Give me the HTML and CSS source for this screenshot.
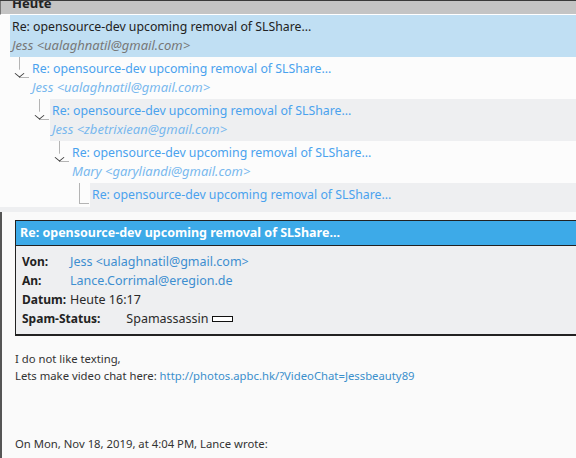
FILE: index.html
```html
<!DOCTYPE html>
<html lang="de">
<head>
  <meta charset="UTF-8">
  <meta name="viewport" content="width=device-width, initial-scale=1.0">
  <title>Posteingang</title>
  <link rel="stylesheet" href="styles.css">
</head>
<body>

  <div class="mail-window">
    <!-- Thread list -->
    <div class="thread-list">
      <div class="group-header"><span>Heute</span></div>

      <div class="thread-row selected">
        <div class="gutter level-0"></div>
        <div class="msg">
          <div class="subject">Re: opensource-dev upcoming removal of SLShare...</div>
          <div class="sender">Jess &lt;ualaghnatil@gmail.com&gt;</div>
        </div>
      </div>

      <div class="thread-row">
        <div class="gutter branch open" style="width:30px"></div>
        <div class="msg light">
          <div class="subject">Re: opensource-dev upcoming removal of SLShare...</div>
          <div class="sender">Jess &lt;ualaghnatil@gmail.com&gt;</div>
        </div>
      </div>

      <div class="thread-row">
        <div class="gutter branch open" style="width:50px"></div>
        <div class="msg grey">
          <div class="subject">Re: opensource-dev upcoming removal of SLShare...</div>
          <div class="sender">Jess &lt;zbetrixiean@gmail.com&gt;</div>
        </div>
      </div>

      <div class="thread-row">
        <div class="gutter branch open" style="width:70px"></div>
        <div class="msg light">
          <div class="subject">Re: opensource-dev upcoming removal of SLShare...</div>
          <div class="sender">Mary &lt;garyliandi@gmail.com&gt;</div>
        </div>
      </div>

      <div class="thread-row">
        <div class="gutter branch" style="width:90px"></div>
        <div class="msg grey">
          <div class="subject">Re: opensource-dev upcoming removal of SLShare...</div>
        </div>
      </div>
    </div>

    <div class="splitter"></div>

    <!-- Preview pane -->
    <div class="preview">
      <div class="mail-header">
        <div class="mail-title">Re: opensource-dev upcoming removal of SLShare...</div>
        <div class="mail-fields">
          <div class="field">
            <span class="label">Von:</span>
            <span class="value link">Jess &lt;ualaghnatil@gmail.com&gt;</span>
          </div>
          <div class="field">
            <span class="label">An:</span>
            <span class="value link">Lance.Corrimal@eregion.de</span>
          </div>
          <div class="field">
            <span class="label">Datum:</span>
            <span class="value">Heute 16:17</span>
          </div>
          <div class="field">
            <span class="label">Spam-Status:</span>
            <span class="value spam">Spamassassin <span class="spam-bar"></span></span>
          </div>
        </div>
      </div>

      <div class="mail-body">
        <p>I do not like texting,<br>
        Lets make video chat here: <a href="#">http://photos.apbc.hk/?VideoChat=Jessbeauty89</a></p>
        <p class="quote-intro">On Mon, Nov 18, 2019, at 4:04 PM, Lance wrote:</p>
      </div>
    </div>
  </div>

</body>
</html>
```

FILE: styles.css
```css
/* Global */
body {
    margin: 0;
    padding: 0;
    font-family: "Noto Sans", sans-serif;
    background-color: #fafafa;
}

.mail-window {
    width: 576px;
    height: 458px;
    overflow: hidden;
}

/* Thread list */
.thread-list {
    height: 206px;
    overflow: hidden;
    border-top: 1px solid #3a3a3a;
    background-color: #fcfcfc;
}

.group-header {
    height: 13px;
    overflow: hidden;
    background-color: #c4c4c4;
    border-left: 1px solid #777;
    border-bottom: 1px solid #ffffff;
}

.group-header span {
    display: block;
    margin-top: -7px;
    padding-left: 11px;
    font-size: 13px;
    line-height: 18px;
    font-weight: bold;
    color: #222;
}

.thread-row {
    display: flex;
    height: 42px;
}

.gutter {
    position: relative;
    flex: none;
    width: 10px;
    background-color: #fcfcfc;
}

/* tree connector: down from the parent, then across to the row */
.gutter.branch::before {
    content: "";
    position: absolute;
    top: 0;
    right: 1px;
    width: 9px;
    height: 20px;
    border-left: 1px solid #b4b4b4;
    border-bottom: 1px solid #b4b4b4;
}

/* expand chevron sits over the joint */
.gutter.open::after {
    content: "";
    position: absolute;
    top: 13px;
    right: 7px;
    width: 6px;
    height: 6px;
    border-right: 1px solid #3a3a3a;
    border-bottom: 1px solid #3a3a3a;
    background-color: #fcfcfc;
    transform: scaleY(0.8) rotate(45deg);
}

.msg {
    flex: 1;
    padding: 3px 0 0 2px;
    font-size: 12.3px;
    line-height: 18px;
    white-space: nowrap;
    color: #4aa2ee;
}

.msg.light {
    background-color: #fcfcfc;
}

.msg.grey {
    background-color: #eeeff1;
}

.selected .msg {
    background-color: #c0dff3;
    color: #222;
}

.sender {
    font-size: 13px;
    font-style: italic;
    color: #78b8ee;
}

.selected .sender {
    color: #777;
}

.splitter {
    height: 5px;
    background-color: #eeeff1;
}

/* Preview */
.preview {
    height: 246px;
    padding: 8px 0 0 13px;
    border-left: 2px solid #555;
    background-color: #fafafa;
    color: #2a2a2a;
}

.mail-header {
    width: 600px;
    border: 1px solid #222;
    border-bottom-width: 2px;
    background-color: #eeeff1;
    font-size: 12.5px;
}

.mail-title {
    height: 24px;
    padding-left: 4px;
    line-height: 24px;
    font-weight: bold;
    color: #ffffff;
    background-color: #3daae8;
    border-bottom: 1px solid #222;
    white-space: nowrap;
}

.mail-fields {
    padding: 6px 0 6px 6px;
}

.field {
    display: flex;
    height: 19px;
    line-height: 19px;
    white-space: nowrap;
}

.label {
    min-width: 48px;
    font-size: 12px;
    font-weight: bold;
    color: #222;
}

.value.link {
    color: #3d8ed0;
}

.value.spam {
    margin-left: 26px;
}

.spam-bar {
    display: inline-block;
    width: 19px;
    height: 4px;
    border: 1px solid #111;
    background-color: #ffffff;
    vertical-align: 1px;
}

.mail-body {
    padding-top: 14px;
    font-size: 11.3px;
    line-height: 17px;
    color: #333;
}

.mail-body p {
    margin: 0;
}

.mail-body a {
    color: #3a8fcc;
    text-decoration: none;
}

.quote-intro {
    padding-top: 51px;
}
```
